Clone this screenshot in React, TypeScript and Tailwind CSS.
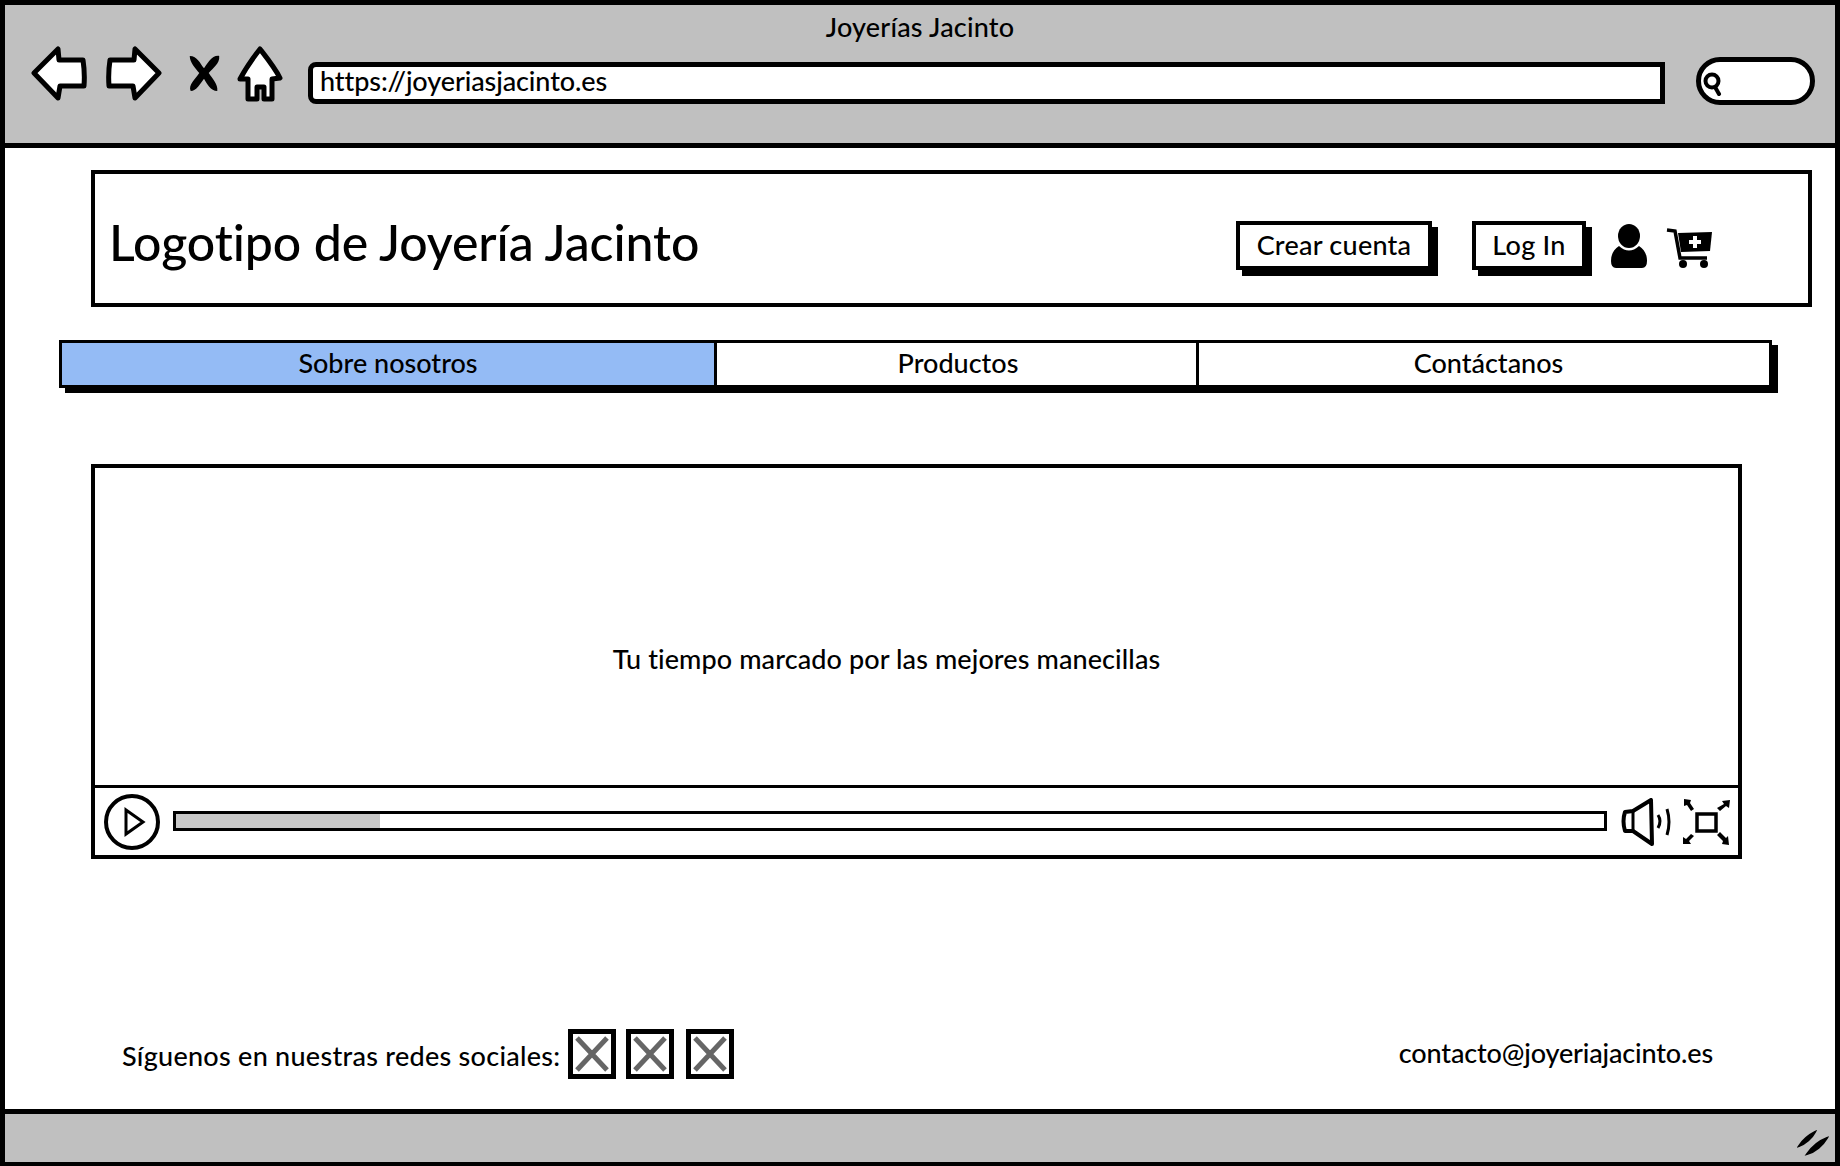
import React from "react"

function BackArrow({ flip = false }: { flip?: boolean }) {
  return (
    <svg width="58" height="56" viewBox="0 0 58 56" className={flip ? "-scale-x-100" : ""}>
      <path d="M3 28 L27 4 L28 15 L52 15 Q54 28 53 41 L29 41 L27 53 Z" fill="#fff" stroke="#000" strokeWidth="5" strokeLinejoin="round" />
    </svg>
  )
}

function CloseIcon() {
  return (
    <svg width="34" height="38" viewBox="0 0 34 40">
      <path d="M2 2 C10 2 13 10 17 15 C21 10 25 1 33 2 C34 10 26 15 22 20 C26 26 32 32 31 39 C24 39 20 31 17 26 C13 31 9 39 3 39 C0 33 8 26 12 20 C8 15 2 9 2 2 Z" fill="#000" />
    </svg>
  )
}

function HomeIcon() {
  return (
    <svg width="46" height="56" viewBox="0 0 46 56">
      <path d="M23 3 C30 12 38 22 43 32 L35 33 L35 53 L27 53 L27 41 L20 41 L20 53 L11 53 L11 33 L3 33 C9 22 16 12 23 3 Z" fill="#fff" stroke="#000" strokeWidth="5" strokeLinejoin="round" />
    </svg>
  )
}

function SearchPill() {
  return (
    <div className="flex h-[48px] w-[119px] items-center rounded-[24px] border-[5px] border-black bg-white pl-[2px]">
      <svg width="20" height="24" viewBox="0 0 20 24" className="mt-[6px]">
        <circle cx="9" cy="9" r="6.5" fill="none" stroke="#000" strokeWidth="4" />
        <path d="M12 15 L16 22" stroke="#000" strokeWidth="4" strokeLinecap="round" />
      </svg>
    </div>
  )
}

function PersonIcon() {
  return (
    <svg width="36" height="44" viewBox="0 0 36 44">
      <ellipse cx="18" cy="12" rx="11" ry="12" fill="#000" />
      <path d="M8 22 Q18 31 28 22 C33 25 36 30 36 37 Q36 44 31 44 L5 44 Q0 44 0 37 C0 30 3 25 8 22 Z" fill="#000" />
    </svg>
  )
}

function CartIcon() {
  return (
    <svg width="46" height="40" viewBox="0 0 46 40">
      <path d="M1 2 L9 3 L14 30 L41 30" fill="none" stroke="#000" strokeWidth="3.5" />
      <path d="M12 5 L46 4 L44 23 L15 24 Z" fill="#000" />
      <path d="M29 8 V20 M23 14 H35" stroke="#fff" strokeWidth="4" />
      <circle cx="17" cy="36" r="4" fill="#000" />
      <circle cx="38" cy="36" r="4" fill="#000" />
    </svg>
  )
}

function PlayButton() {
  return (
    <svg width="56" height="56" viewBox="0 0 56 56">
      <circle cx="28" cy="28" r="26" fill="#fff" stroke="#000" strokeWidth="4" />
      <path d="M22 16 L39 28 L22 40 Z" fill="none" stroke="#000" strokeWidth="3" />
    </svg>
  )
}

function VolumeIcon() {
  return (
    <svg width="52" height="48" viewBox="0 0 52 48">
      <path d="M12 13 L30 2 L31 46 L12 33 L4 33 Q1 23 4 14 Z" fill="#fff" stroke="#000" strokeWidth="4" strokeLinejoin="round" />
      <path d="M12 13 V33" stroke="#000" strokeWidth="3" />
      <path d="M37 17 Q41 23 37 30" fill="none" stroke="#000" strokeWidth="3" />
      <path d="M46 11 Q50 24 46 37" fill="none" stroke="#000" strokeWidth="3" />
    </svg>
  )
}

function FullscreenIcon() {
  return (
    <svg width="50" height="48" viewBox="0 0 50 48">
      <rect x="16" y="16" width="19" height="17" fill="none" stroke="#000" strokeWidth="3.5" />
      <path d="M3 1 L10 2 L9 5 L13 11 L10 13 L6 7 L3 8 Z" fill="#000" />
      <path d="M49 2 L48 10 L45 8 L39 13 L36 10 L43 6 L41 3 Z" fill="#000" />
      <path d="M2 46 L2 39 L5 41 L10 36 L13 38 L8 43 L10 46 Z" fill="#000" />
      <path d="M48 47 L41 46 L42 43 L36 37 L39 34 L45 40 L47 38 Z" fill="#000" />
    </svg>
  )
}

function ImagePlaceholder() {
  return (
    <div className="h-[50px] w-[48px] border-[5px] border-black bg-white">
      <svg width="38" height="40" viewBox="0 0 38 40" className="block">
        <path d="M4 4 L34 36 M34 4 L4 36" stroke="#666" strokeWidth="5" />
      </svg>
    </div>
  )
}

function ShadowButton({ label, width }: { label: string; width: string }) {
  return (
    <div className={`flex h-[49px] items-center justify-center border-[4px] border-black bg-white text-[27px] tracking-[0.25px] shadow-[6px_6px_0_0_#000] ${width}`}>
      {label}
    </div>
  )
}

function ResizeGrip() {
  return (
    <svg width="32" height="26" viewBox="0 0 32 26">
      <path d="M2 16 C6 10 12 5 18 2 C15 8 8 14 2 16 Z" fill="#000" stroke="#000" strokeWidth="2" />
      <path d="M10 24 C15 17 22 11 30 8 C26 15 18 22 10 24 Z" fill="#000" stroke="#000" strokeWidth="2" />
    </svg>
  )
}

export default function App() {
  return (
    <div className="flex h-[1166px] w-[1840px] flex-col border-x-[5px] border-t-[5px] border-b-[4px] border-black bg-white font-['Lato','Liberation_Sans',sans-serif] font-medium text-black [font-variant-ligatures:none]">
      {/* browser chrome */}
      <div className="h-[143px] shrink-0 border-b-[5px] border-black bg-[#c0c0c0]">
        <div className="pt-[6px] text-center text-[27px] leading-[32px] tracking-[0.2px]">Joyerías Jacinto</div>
        <div className="mt-[2px] flex items-start pl-[26px]">
          <BackArrow />
          <div className="ml-[15px]">
            <BackArrow flip />
          </div>
          <div className="ml-[25px] mt-[9px]">
            <CloseIcon />
          </div>
          <div className="ml-[16px] mt-[1px]">
            <HomeIcon />
          </div>
          <div className="ml-[25px] mt-[17px] flex h-[42px] w-[1357px] items-center rounded-l-[8px] border-[5px] border-black bg-white pb-[3px] pl-[7px] text-[27px] tracking-[-0.1px]">
            https://joyeriasjacinto.es
          </div>
          <div className="ml-[31px] mt-[12px]">
            <SearchPill />
          </div>
        </div>
      </div>

      {/* page */}
      <div className="flex flex-1 flex-col">
        <div className="ml-[86px] mt-[22px] flex h-[137px] w-[1721px] items-center border-[4px] border-black pl-[14px]">
          <div className="mt-[6px] text-[50px] leading-none tracking-[-0.1px]">Logotipo de Joyería Jacinto</div>
          <div className="ml-auto mt-[14px] flex items-center pr-[96px]">
            <ShadowButton label="Crear cuenta" width="w-[196px]" />
            <div className="ml-[40px]">
              <ShadowButton label="Log In" width="w-[114px]" />
            </div>
            <div className="ml-[25px]">
              <PersonIcon />
            </div>
            <div className="ml-[19px] mt-[4px]">
              <CartIcon />
            </div>
          </div>
        </div>

        <div className="ml-[54px] mt-[33px] flex h-[48px] w-[1713px] border-[3px] border-black text-[27px] shadow-[6px_5px_0_0_#000]">
          <div className="flex w-[655px] items-center justify-center border-r-[3px] border-black bg-[#94bbf5] pb-[1px]">Sobre nosotros</div>
          <div className="flex w-[482px] items-center justify-center border-r-[3px] border-black pb-[1px] pl-[3px]">Productos</div>
          <div className="flex flex-1 items-center justify-center pb-[1px] pl-[9px]">Contáctanos</div>
        </div>

        <div className="ml-[86px] mt-[76px] flex h-[395px] w-[1651px] flex-col border-[4px] border-black">
          <div className="flex flex-1 items-center justify-center pr-[60px] pt-[66px] text-[27px] tracking-[0.1px]">Tu tiempo marcado por las mejores manecillas</div>
          <div className="flex h-[70px] items-center border-t-[3px] border-black pl-[9px]">
            <PlayButton />
            <div className="mb-[2px] ml-[13px] h-[20px] w-[1434px] border-[3px] border-black">
              <div className="h-full w-[204px] bg-[#c8c8c8]" />
            </div>
            <div className="ml-[14px]">
              <VolumeIcon />
            </div>
            <div className="ml-[8px]">
              <FullscreenIcon />
            </div>
          </div>
        </div>

        <div className="mt-[170px] flex items-center pl-[117px] pr-[122px] text-[27px]">
          <span className="pt-[4px] tracking-[0.27px]">Síguenos en nuestras redes sociales:</span>
          <div className="ml-[8px] flex">
            <ImagePlaceholder />
            <div className="ml-[10px]">
              <ImagePlaceholder />
            </div>
            <div className="ml-[12px]">
              <ImagePlaceholder />
            </div>
          </div>
          <span className="mb-[2px] ml-auto tracking-[-0.15px]">contacto@joyeriajacinto.es</span>
        </div>
      </div>

      {/* status bar */}
      <div className="flex h-[53px] shrink-0 items-end justify-end border-t-[5px] border-black bg-[#c0c0c0] pb-[6px] pr-[6px]">
        <ResizeGrip />
      </div>
    </div>
  )
}
